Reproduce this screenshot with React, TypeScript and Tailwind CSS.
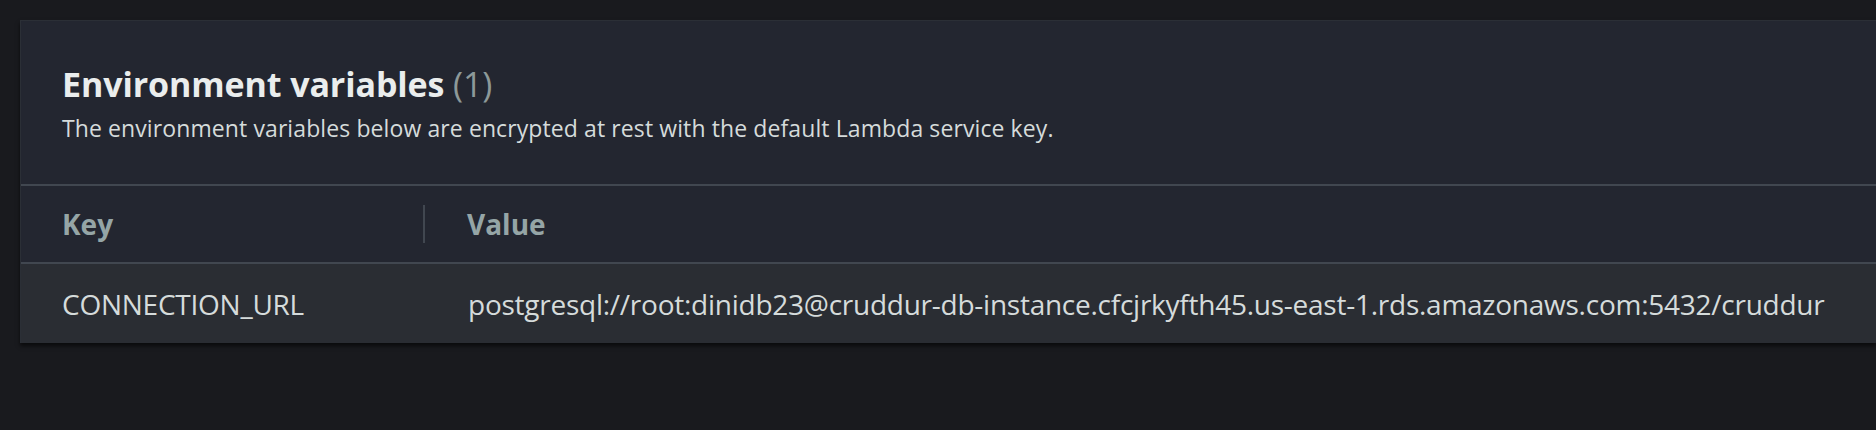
export default function App() {
  const url =
    "postgresql://root:dinidb23@cruddur-db-instance.cfcjrkyfth45.us-east-1.rds.amazonaws.com:5432/cruddur";

  return (
    <div
      className="h-[430px] w-full overflow-hidden bg-[#191a1e] pt-[20px] pl-[20px]"
      style={{ fontFamily: '"Open Sans", "Noto Sans", sans-serif' }}
    >
      <div className="border-t border-l border-[#2b2f36] bg-[#232630] shadow-[0_3px_4px_rgba(0,0,0,0.6)]">
        {/* header */}
        <div className="pl-[41px] pt-[43px] pb-[42px]">
          <h2 className="text-[34px] leading-[40px] font-bold text-[#eaeded] tracking-[-0.1px]">
            Environment variables <span className="font-normal text-[#8d9999]">(1)</span>
          </h2>
          <p className="mt-[10px] text-[23px] leading-[28px] text-[#d5dbdb] tracking-[0.1px]">
            The environment variables below are encrypted at rest with the default Lambda service key.
          </p>
        </div>

        {/* table */}
        <div className="border-t-2 border-[#414750]">
          <div className="flex h-[76px] items-center">
            <div className="flex w-[404px] items-center justify-between pl-[41px]">
              <span className="text-[28px] font-bold text-[#95a5a6]">Key</span>
              <span className="h-[38px] w-[2px] bg-[#414750]" />
            </div>
            <div className="pl-[42px] text-[28px] font-bold text-[#95a5a6]">Value</div>
          </div>
          <div className="flex h-[81px] items-center border-t-2 border-[#414750] bg-[#2a2d33] text-[28px] tracking-[-0.25px] text-[#d5dbdb]">
            <div className="w-[404px] pl-[41px]">CONNECTION_URL</div>
            <div className="pl-[43px] whitespace-nowrap">{url}</div>
          </div>
        </div>
      </div>
    </div>
  );
}
